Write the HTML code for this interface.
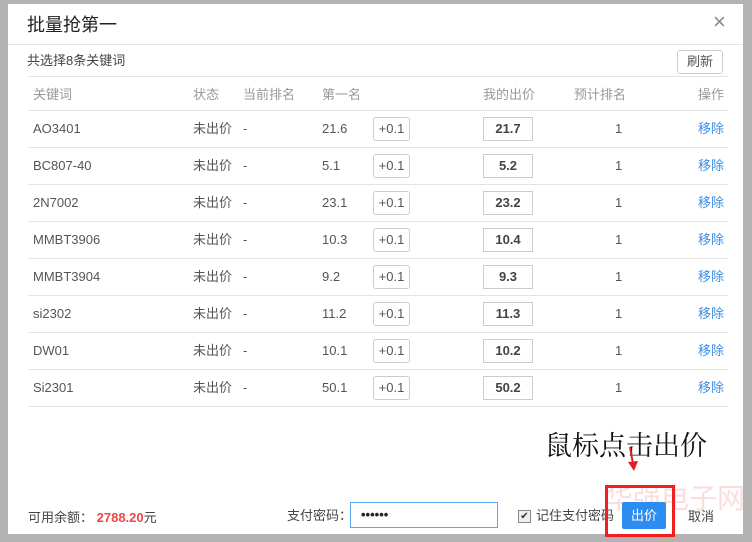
<!DOCTYPE html>
<html><head><meta charset="utf-8"><style>
body{margin:0;width:752px;height:542px;background:#b3b3b3;position:relative;overflow:hidden;font-family:"Liberation Sans","Noto Sans CJK SC",sans-serif;font-size:13px;color:#555}
.d{position:absolute;left:8px;top:4px;width:735px;height:530px;background:#fff}
.a{position:absolute;white-space:nowrap;line-height:16px;height:16px}
.hl{position:absolute;left:28px;width:700px;height:1px;background:#e4e4e4}
.btn{position:absolute;border:1px solid #ccc;border-radius:3px;background:#fff;text-align:center;color:#555}
.bid{position:absolute;border:1px solid #ccc;text-align:center;font-weight:bold;color:#444}
.g{color:#999}
.lk{color:#3a8ee6}
</style></head><body>
<div class="d"></div>
<div class="a" style="left:27px;top:14px;font-size:18px;line-height:22px;height:22px;color:#222">批量抢第一</div>
<div class="a" style="left:713px;top:14px;font-size:22px;color:#888">×</div>
<div style="position:absolute;left:8px;top:44px;width:735px;height:1px;background:#e4e4e4"></div>
<div class="a" style="left:27px;top:53px;color:#444">共选择8条关键词</div>
<div class="btn" style="left:677px;top:50px;width:44px;height:22px;line-height:22px">刷新</div>
<div class="hl" style="top:76px"></div>
<div class="a g" style="left:33px;top:87px">关键词</div>
<div class="a g" style="left:193px;top:87px">状态</div>
<div class="a g" style="left:243px;top:87px">当前排名</div>
<div class="a g" style="left:322px;top:87px">第一名</div>
<div class="a g" style="left:483px;top:87px">我的出价</div>
<div class="a g" style="left:574px;top:87px">预计排名</div>
<div class="a g" style="left:698px;top:87px">操作</div>
<div class="hl" style="top:110px"></div>
<div id="rows"></div>
<script>
var r=[["AO3401","21.6","21.7"],["BC807-40","5.1","5.2"],["2N7002","23.1","23.2"],["MMBT3906","10.3","10.4"],["MMBT3904","9.2","9.3"],["si2302","11.2","11.3"],["DW01","10.1","10.2"],["Si2301","50.1","50.2"]];
var h="";r.forEach(function(x,i){var y=110+i*37;
h+='<div class="a" style="left:33px;top:'+(y+11)+'px">'+x[0]+'</div>'+
'<div class="a" style="left:193px;top:'+(y+11)+'px">未出价</div>'+
'<div class="a" style="left:243px;top:'+(y+11)+'px">-</div>'+
'<div class="a" style="left:322px;top:'+(y+11)+'px">'+x[1]+'</div>'+
'<div class="btn" style="left:373px;top:'+(y+7)+'px;width:35px;height:22px;line-height:22px">+0.1</div>'+
'<div class="bid" style="left:483px;top:'+(y+7)+'px;width:48px;height:22px;line-height:22px">'+x[2]+'</div>'+
'<div class="a" style="left:615px;top:'+(y+11)+'px">1</div>'+
'<div class="a lk" style="left:698px;top:'+(y+11)+'px">移除</div>'+
'<div class="hl" style="top:'+(y+37)+'px"></div>';});
document.getElementById("rows").innerHTML=h;
</script>
<div class="a" style="left:605px;top:484px;font-size:28px;line-height:30px;height:30px;color:rgba(240,120,120,.25)">华强电子网</div>
<div class="a" style="left:28px;top:510px;color:#444">可用余额： <b style="color:#f04848">2788.20</b>元</div>
<div class="a" style="left:287px;top:508px;color:#444">支付密码：</div>
<div style="position:absolute;left:350px;top:502px;width:148px;height:26px;border:1px solid #5aa7ec;box-sizing:border-box;padding-left:10px;line-height:24px;font-size:13px;color:#222;font-weight:bold">••••••</div>
<div style="position:absolute;left:518px;top:510px;width:11px;height:11px;border:1px solid #888;background:#eee;font-size:10px;line-height:11px;text-align:center;color:#333">✔</div>
<div class="a" style="left:536px;top:508px;color:#444">记住支付密码</div>
<div style="position:absolute;left:622px;top:502px;width:44px;height:27px;background:#2d8cf0;color:#fff;text-align:center;line-height:27px;border-radius:2px">出价</div>
<div class="a" style="left:688px;top:509px;color:#444">取消</div>
<div style="position:absolute;left:605px;top:485px;width:64px;height:46px;border:3px solid #f02020"></div>
<div class="a" style="left:545px;top:430px;font-family:'Liberation Serif','Noto Serif CJK SC',serif;font-size:27px;line-height:32px;height:32px;color:#111">鼠标点击出价</div>
<svg style="position:absolute;left:0;top:0" width="752" height="542"><line x1="630" y1="447" x2="633" y2="464" stroke="#e02020" stroke-width="2"/><polygon points="628,462 638,461 634,471" fill="#e02020"/></svg>
</body></html>
